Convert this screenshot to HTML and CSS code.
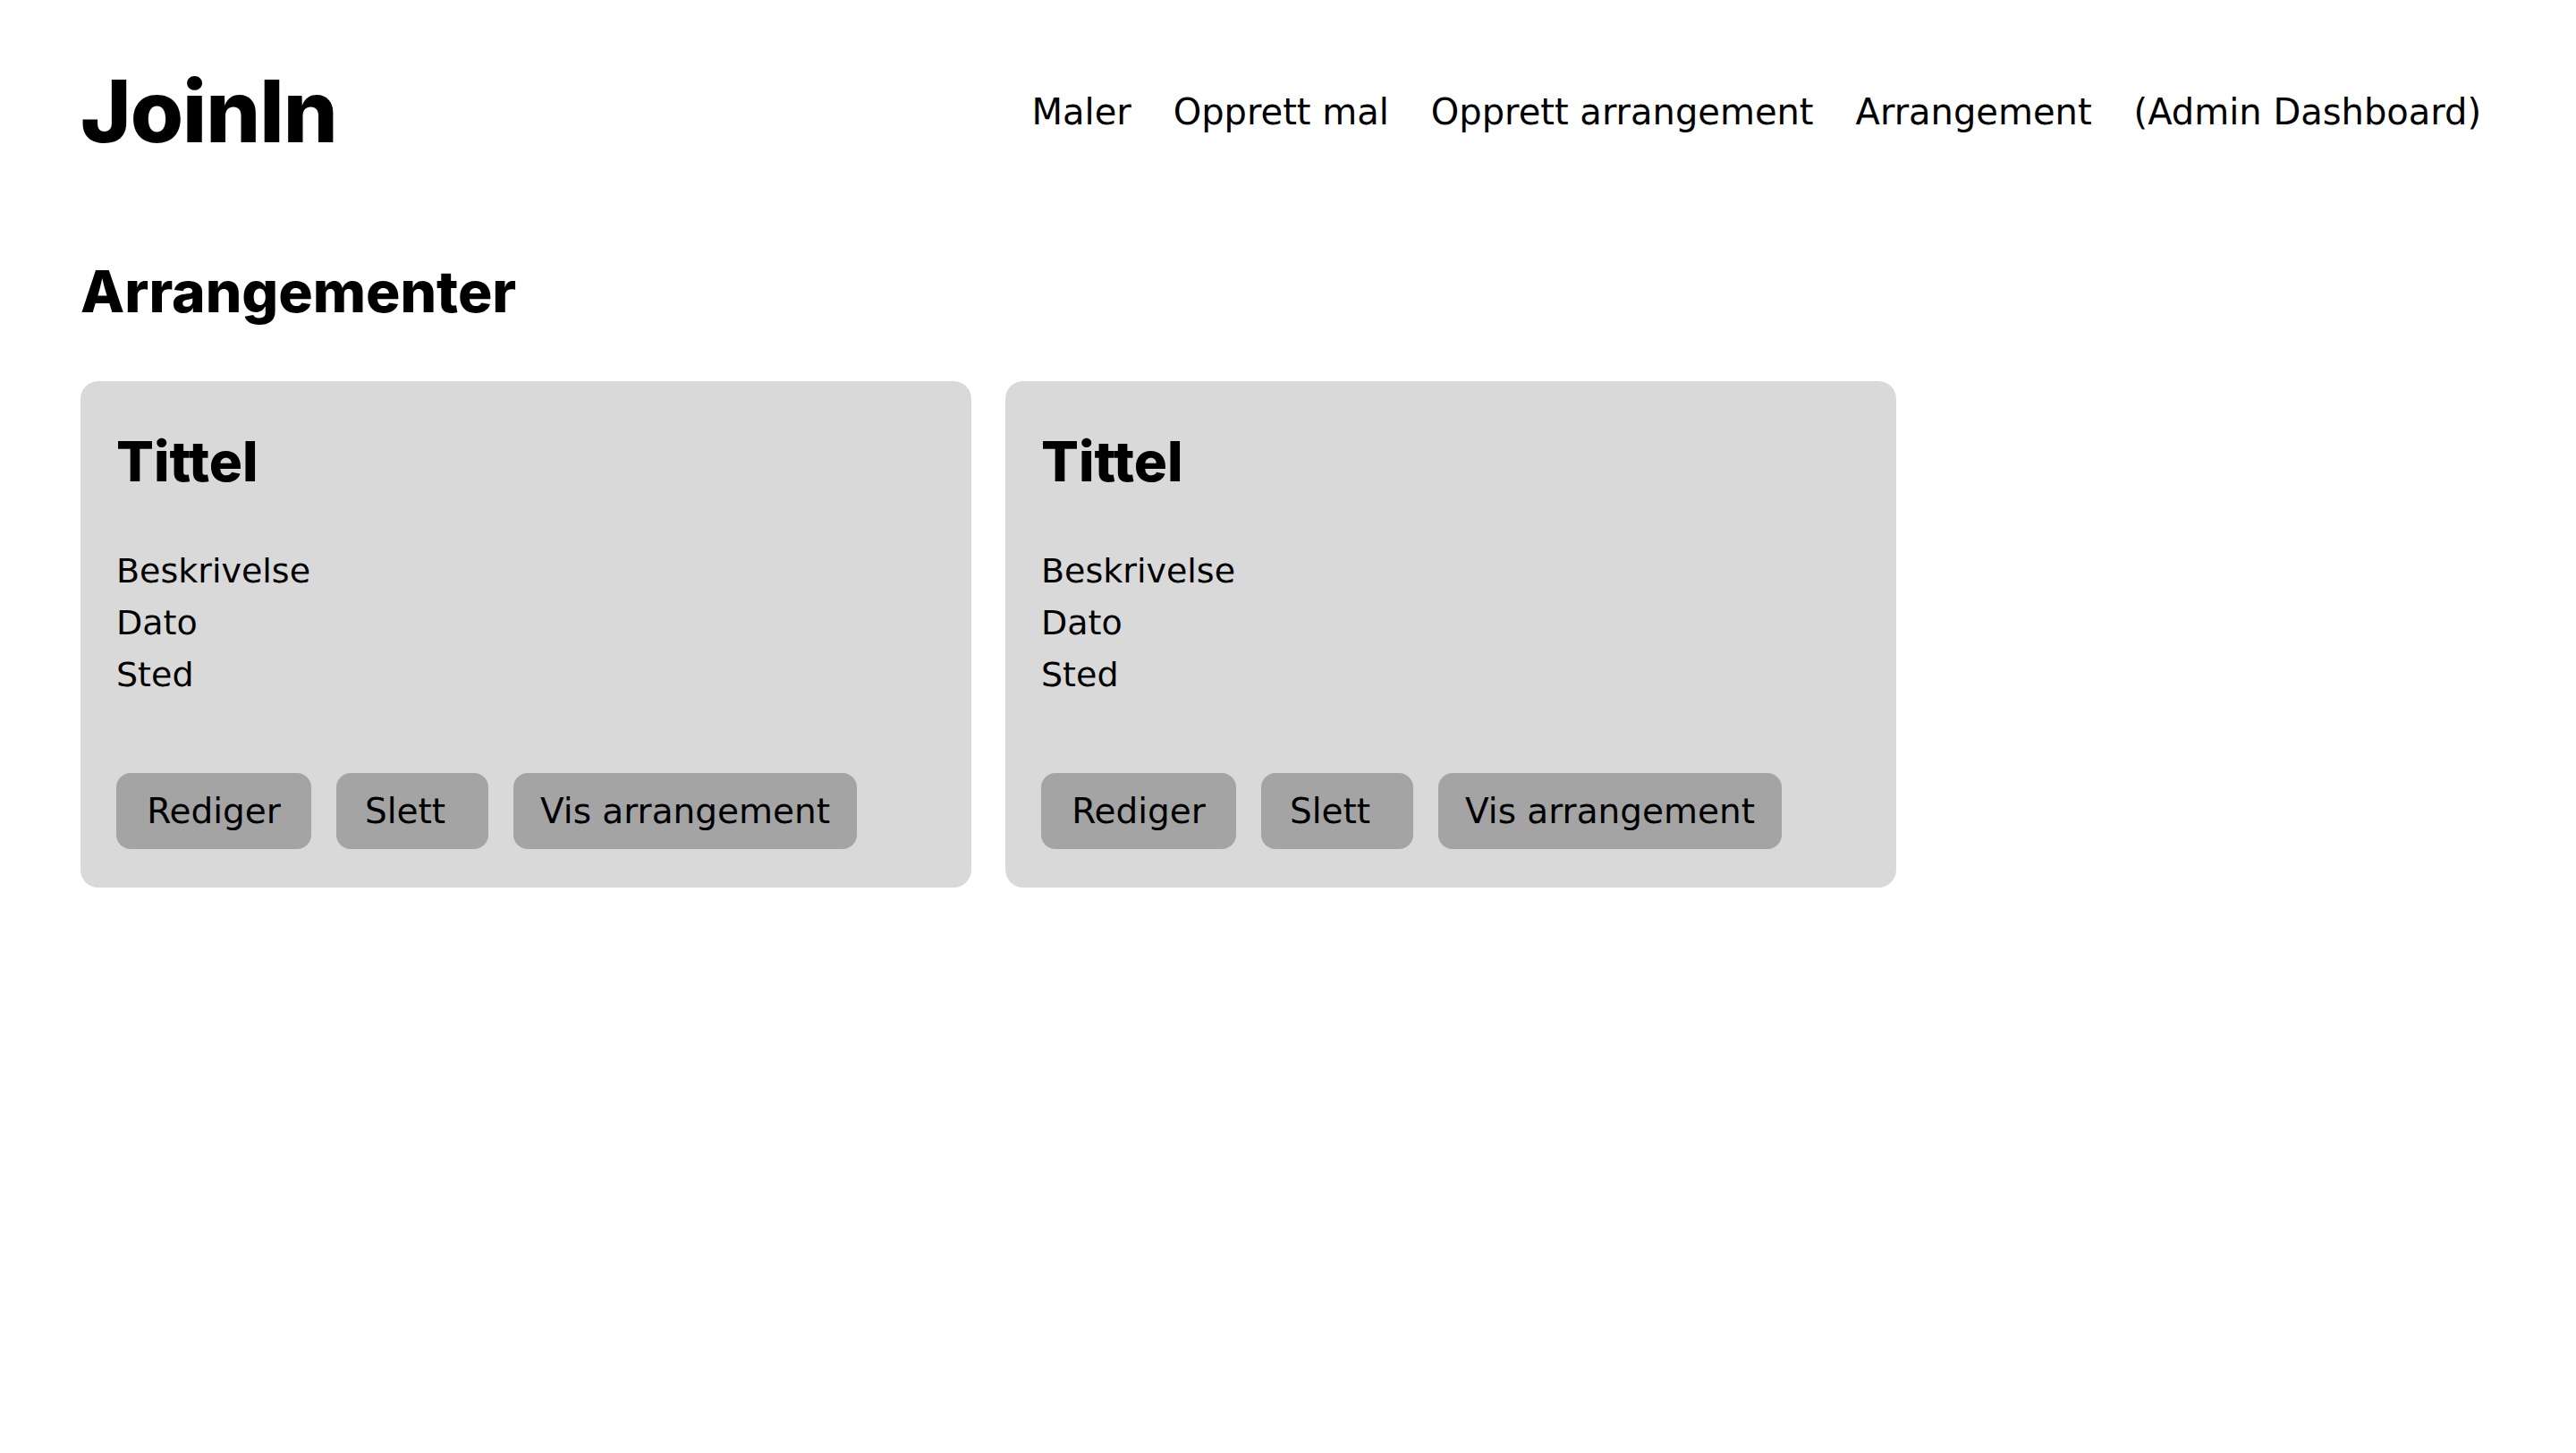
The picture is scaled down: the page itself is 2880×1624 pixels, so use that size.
FILE: index.html
```html
<!DOCTYPE html>
<html lang="no">
<head>
<meta charset="utf-8">
<title>JoinIn</title>
<link rel="stylesheet" href="styles.css">
</head>
<body>
<header class="topbar">
  <div class="logo">JoinIn</div>
  <nav class="nav">
    <a href="#">Maler</a>
    <a href="#">Opprett mal</a>
    <a href="#">Opprett arrangement</a>
    <a href="#">Arrangement</a>
    <a href="#">(Admin Dashboard)</a>
  </nav>
</header>
<main class="content">
  <h1 class="page-title">Arrangementer</h1>
  <div class="cards">
    <section class="card">
      <h2 class="card-title">Tittel</h2>
      <div class="card-info">
        <p>Beskrivelse</p>
        <p>Dato</p>
        <p>Sted</p>
      </div>
      <div class="actions">
        <button class="btn btn-edit">Rediger</button>
        <button class="btn btn-delete">Slett</button>
        <button class="btn btn-view">Vis arrangement</button>
      </div>
    </section>
    <section class="card">
      <h2 class="card-title">Tittel</h2>
      <div class="card-info">
        <p>Beskrivelse</p>
        <p>Dato</p>
        <p>Sted</p>
      </div>
      <div class="actions">
        <button class="btn btn-edit">Rediger</button>
        <button class="btn btn-delete">Slett</button>
        <button class="btn btn-view">Vis arrangement</button>
      </div>
    </section>
  </div>
</main>
</body>
</html>
```
FILE: styles.css
```css
* { box-sizing: border-box; }
html, body {
  margin: 0;
  padding: 0;
  background: #ffffff;
  color: #000000;
  font-family: "DejaVu Sans", "Liberation Sans", sans-serif;
}
.topbar {
  display: flex;
  justify-content: space-between;
  align-items: flex-start;
  padding: 66px 106px 0 90px;
  height: 196px;
}
.logo {
  font-family: "Inter", sans-serif;
  font-weight: 800;
  font-size: 96px;
  line-height: 116px;
  letter-spacing: -1px;
}
.nav {
  display: flex;
  gap: 47px;
  padding-top: 29px;
}
.nav a {
  color: #000;
  text-decoration: none;
  font-size: 40px;
  line-height: 60px;
}
.content {
  padding: 0 90px;
}
.page-title {
  margin: 0;
  font-family: "Inter", sans-serif;
  font-weight: 800;
  font-size: 64px;
  line-height: 80px;
  padding-top: 90px;
}
.cards {
  display: flex;
  gap: 38px;
  margin-top: 60px;
}
.card {
  width: 996px;
  height: 566px;
  background: #d9d9d9;
  border-radius: 20px;
  padding: 50px 40px 43px 40px;
  display: flex;
  flex-direction: column;
}
.card-title {
  margin: 0;
  font-family: "Inter", sans-serif;
  font-weight: 800;
  font-size: 62px;
  line-height: 80px;
}
.card-info {
  margin-top: 53px;
}
.card-info p {
  margin: 0;
  font-size: 38px;
  line-height: 58px;
}
.actions {
  margin-top: auto;
  display: flex;
  gap: 28px;
}
.btn {
  font-family: "DejaVu Sans", "Liberation Sans", sans-serif;
  font-size: 39px;
  height: 85px;
  border: none;
  border-radius: 16px;
  background: #a4a4a4;
  color: #000;
  padding: 0;
  text-align: center;
}
.btn-edit { width: 218px; }
.btn-delete { width: 170px; padding-right: 16px; }
.btn-view { width: 384px; }
```
